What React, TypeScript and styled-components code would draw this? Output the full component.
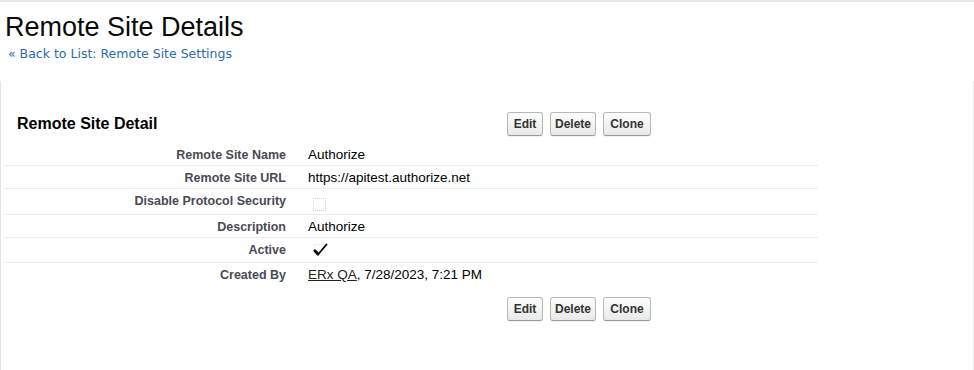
import styled, { createGlobalStyle } from 'styled-components';

const GlobalStyle = createGlobalStyle`
  html, body {
    margin: 0;
    padding: 0;
    background: #fff;
  }
  body {
    font-family: 'Liberation Sans', Arial, sans-serif;
    color: #000;
  }
`;

const Page = styled.div`
  width: 974px;
  height: 370px;
  box-sizing: border-box;
  border-top: 2px solid #e6e6e6;
  overflow: hidden;
`;

//페이지 헤더
const PageTitle = styled.h1`
  margin: 10px 0 0 5px;
  font-size: 27px;
  line-height: 31px;
  font-weight: normal;
  color: #0a0a0a;
`;

const BackLink = styled.a`
  display: block;
  margin: 3px 0 0 8px;
  font-family: 'DejaVu Sans', Verdana, sans-serif;
  font-size: 12.5px;
  line-height: 15px;
  color: #2b6cae;
  text-decoration: none;
`;
//페이지 헤더 end

const Body = styled.div`
  margin-top: 20px;
  min-height: 300px;
  border-left: 1px solid #e4e4e4;
  border-right: 1px solid #ececec;
  padding-left: 4px;
`;

//디테일 블록
const Detail = styled.div`
  width: 813px;
  padding-top: 31px;
`;

const Header = styled.div`
  display: grid;
  grid-template-columns: 502px auto;
  align-items: center;
  padding-bottom: 7px;
`;

const HeaderTitle = styled.h2`
  margin: 0 0 0 12px;
  font-size: 16px;
  font-weight: bold;
  color: #000;
`;

const ButtonBar = styled.div`
  display: flex;
  gap: 7px;
`;

const Button = styled.button<{ $w: number }>`
  width: ${p => p.$w}px;
  height: 24px;
  padding: 0;
  font-family: 'Liberation Sans', Arial, sans-serif;
  font-size: 12px;
  font-weight: bold;
  color: #333;
  background: linear-gradient(#fdfdfd, #e9e9e9);
  border: 1px solid #b8b8b8;
  border-bottom-color: #9a9a9a;
  border-radius: 3px;
  box-shadow: 0 1px 0 rgba(0, 0, 0, 0.05);
`;

const Row = styled.div<{ $last?: boolean }>`
  display: grid;
  grid-template-columns: 293px 1fr;
  border-bottom: ${p => (p.$last ? 'none' : '1px solid #ececec')};
`;

const Label = styled.div`
  padding: 6px 12px 3px 0;
  text-align: right;
  font-size: 12.5px;
  line-height: 13px;
  font-weight: bold;
  color: #4a4a56;
`;

const Value = styled.div`
  padding: 5px 10px 3px 10px;
  font-size: 13.5px;
  line-height: 14px;
  color: #000;
`;

const CheckBox = styled.span`
  display: block;
  width: 11px;
  height: 11px;
  margin: 4px 0 0 5px;
  border: 1px dotted #d6d6d6;
`;

const CheckWrap = styled.span`
  display: block;
  width: 15px;
  height: 14px;
  margin: 0 0 2px 5px;
`;

const UserLink = styled.a`
  color: #222;
  text-decoration: underline;
`;

const BottomBar = styled.div`
  padding: 12px 0 0 502px;
`;
//디테일 블록 end

const Check = () => (
  <CheckWrap>
    <svg width="15" height="14" viewBox="0 0 15 14">
      <rect x="1.5" y="1.5" width="11" height="11" fill="none" stroke="#e6e6e6" strokeDasharray="1 1" />
      <path d="M1.5 7.5 L5 11.5 L13.5 1.5" fill="none" stroke="#000" strokeWidth="1.9" strokeLinecap="round" strokeLinejoin="round" />
      <path d="M2 7.8 L5 11" fill="none" stroke="#000" strokeWidth="2.6" strokeLinecap="round" />
    </svg>
  </CheckWrap>
);

const Buttons = () => (
  <ButtonBar>
    <Button $w={36}>Edit</Button>
    <Button $w={46}>Delete</Button>
    <Button $w={48}>Clone</Button>
  </ButtonBar>
);

export default function App() {
  const rows: { label: string; value: React.ReactNode }[] = [
    { label: 'Remote Site Name', value: 'Authorize' },
    { label: 'Remote Site URL', value: 'https://apitest.authorize.net' },
    { label: 'Disable Protocol Security', value: <CheckBox /> },
    { label: 'Description', value: 'Authorize' },
    { label: 'Active', value: <Check /> },
    {
      label: 'Created By',
      value: (
        <>
          <UserLink>ERx QA</UserLink>, 7/28/2023, 7:21 PM
        </>
      ),
    },
  ];

  return (
    <Page>
      <GlobalStyle />
      <PageTitle>Remote Site Details</PageTitle>
      <BackLink>« Back to List: Remote Site Settings</BackLink>
      <Body>
        <Detail>
          <Header>
            <HeaderTitle>Remote Site Detail</HeaderTitle>
            <Buttons />
          </Header>
          {rows.map((r, i) => (
            <Row key={i} $last={i === rows.length - 1}>
              <Label>{r.label}</Label>
              <Value>{r.value}</Value>
            </Row>
          ))}
          <BottomBar>
            <Buttons />
          </BottomBar>
        </Detail>
      </Body>
    </Page>
  );
}
